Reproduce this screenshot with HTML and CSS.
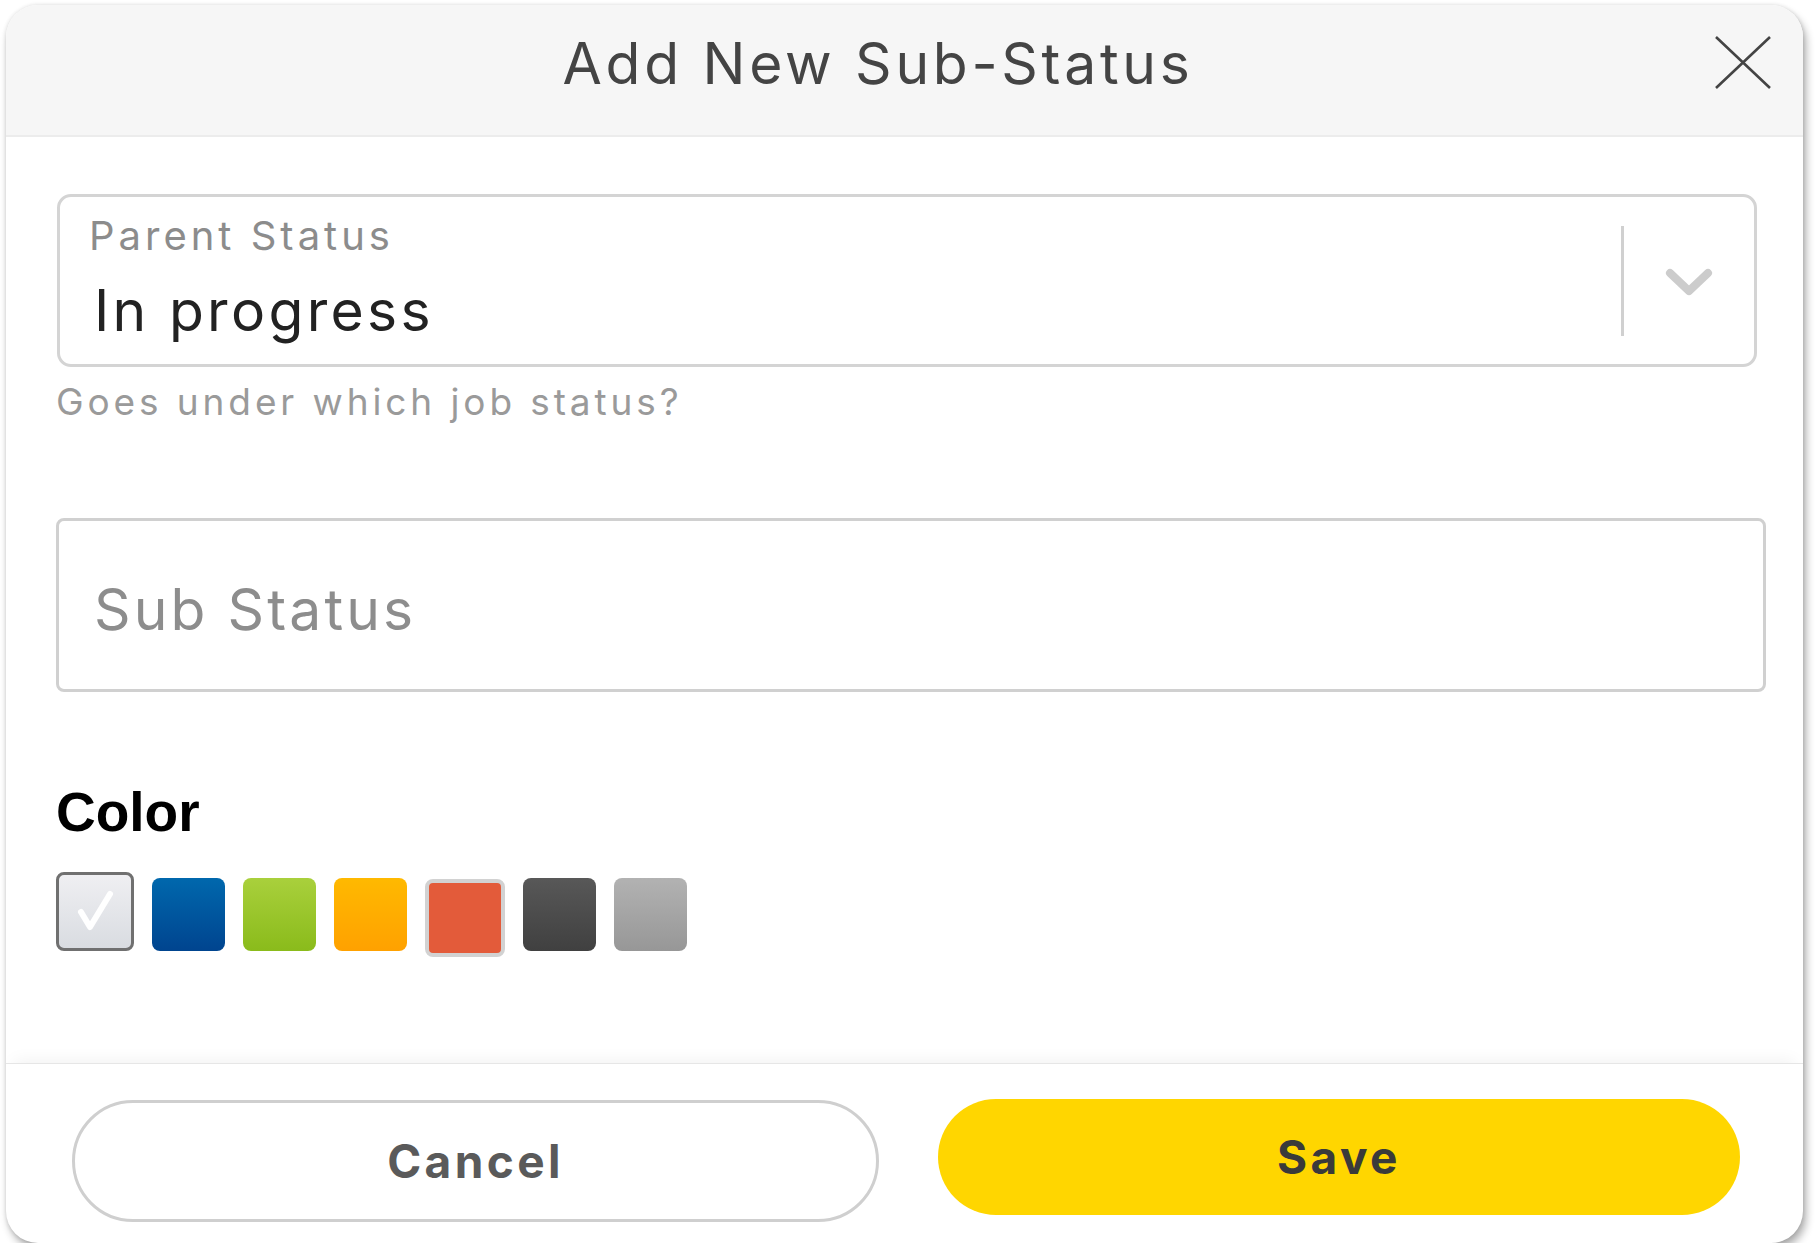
FILE: index.html
```html
<!DOCTYPE html>
<html lang="en">
<head>
<meta charset="UTF-8" />
<meta name="viewport" content="width=device-width, initial-scale=1" />
<title>Add New Sub-Status</title>
<link rel="stylesheet" href="styles.css">
</head>
<body>
<div class="dialog">
  <div class="dialog-header">
    <h1 class="dialog-title">Add New Sub-Status</h1>
    <button class="close-btn" aria-label="Close">
      <svg width="58" height="55" viewBox="0 0 58 55">
        <path d="M2 2 L56 53 M56 2 L2 53" stroke="#444" stroke-width="2.6" fill="none" />
      </svg>
    </button>
  </div>

  <div class="dialog-body">
    <div class="select-box">
      <div class="select-value">
        <div class="select-label">Parent Status</div>
        <div class="select-text">In progress</div>
      </div>
      <div class="select-sep"></div>
      <div class="select-arrow">
        <svg width="50" height="32" viewBox="0 0 50 32">
          <polyline points="6,6 25,24 44,6" stroke="#cccccc" stroke-width="8" fill="none" stroke-linecap="round" stroke-linejoin="round" />
        </svg>
      </div>
    </div>
    <div class="helper">Goes under which job status?</div>

    <div class="text-input">Sub Status</div>

    <div class="color-label">Color</div>
    <div class="swatches">
      <div class="swatch swatch-white selected">
        <svg width="72" height="73" viewBox="0 0 72 73">
          <polyline points="22,37 31,52 51,19" stroke="#fff" stroke-width="6" fill="none" stroke-linecap="round" stroke-linejoin="round" />
        </svg>
      </div>
      <div class="swatch swatch-blue"></div>
      <div class="swatch swatch-green"></div>
      <div class="swatch swatch-orange"></div>
      <div class="swatch swatch-red focused"></div>
      <div class="swatch swatch-dark"></div>
      <div class="swatch swatch-gray"></div>
    </div>
  </div>

  <div class="dialog-footer">
    <button class="btn btn-cancel">Cancel</button>
    <button class="btn btn-save">Save</button>
  </div>
</div>
</body>
</html>
```
FILE: styles.css
```css
body { margin: 0; background: #fff; font-family: Inter, "Open Sans", sans-serif; }

.dialog { width: 1797px; height: 1238px; margin: 5px 0 0 6px; background: #fff; border-radius: 32px; overflow: hidden; display: flex; flex-direction: column; box-shadow: 3px 6px 8px rgba(0,0,0,0.32), 0 0 4px rgba(0,0,0,0.12); }

.dialog-header { height: 112px; padding: 3px 18px 15px 50px; display: flex; align-items: center; background: #f6f6f6; border-bottom: 2px solid #ececec; flex-shrink: 0; }
.dialog-title { flex: 1; margin: 0; text-align: center; font-size: 57px; font-weight: 400; line-height: 68px; color: #444; letter-spacing: 3.7px; }
.close-btn { width: 85px; height: 60px; margin-top: -3px; padding: 0; border: none; background: none; display: flex; align-items: center; justify-content: center; cursor: pointer; }

.dialog-body { flex: 1; padding: 57px 0 0 50px; }

.select-box { width: 1700px; height: 173px; margin-left: 1px; border: 3px solid #d4d4d4; border-radius: 14px; display: flex; align-items: center; box-sizing: border-box; }
.select-value { flex: 1; padding: 16px 0 21px 29px; }
.select-label { font-size: 40px; line-height: 46px; color: #8c8c8c; letter-spacing: 4px; }
.select-text { margin-top: 20px; padding-left: 5px; font-size: 57px; line-height: 64px; color: #222; letter-spacing: 3.3px; }
.select-sep { width: 3px; height: 110px; background: #d0d0d0; }
.select-arrow { width: 130px; display: flex; justify-content: center; padding-top: 4px; }

.helper { margin-top: 15px; font-size: 37px; line-height: 40px; color: #9a9a9a; letter-spacing: 3.9px; }

.text-input { width: 1710px; height: 174px; margin-top: 96px; padding: 8px 0 0 35px; border: 3px solid #d0d0d0; border-radius: 8px; display: flex; align-items: center; font-size: 57px; color: #8d8d8d; letter-spacing: 3.1px; box-sizing: border-box; }

.color-label { margin-top: 90px; font-family: "Liberation Sans", Arial, sans-serif; font-weight: bold; font-size: 55px; line-height: 60px; color: #000; }

.swatches { margin-top: 30px; display: flex; align-items: flex-start; gap: 18px; }
.swatch { width: 73px; height: 73px; margin-top: 6px; border-radius: 8px; box-sizing: border-box; }
.swatch-white { background: linear-gradient(#efeff2, #d9dce1); }
.swatch-blue { background: linear-gradient(#0068ad, #00448f); }
.swatch-green { background: linear-gradient(#a9d03c, #8abb1b); }
.swatch-orange { background: linear-gradient(#ffb900, #ffa100); }
.swatch-red { background: #e35b3a; }
.swatch-dark { background: linear-gradient(#585858, #404040); }
.swatch-gray { background: linear-gradient(#b2b2b2, #979797); }
.swatch.selected { width: 78px; height: 79px; margin-top: 0; border: 3px solid #707070; }
.swatch.focused { width: 80px; height: 78px; margin-top: 7px; border: 4px solid #d2d2d2; }

.dialog-footer { height: 180px; padding: 36px 63px 0 66px; display: flex; align-items: flex-start; gap: 59px; border-top: 1px solid #e6e6e6; box-shadow: 0 -10px 16px -8px rgba(0,0,0,0.06); box-sizing: border-box; flex-shrink: 0; }
.btn { border-radius: 61px; font-family: Inter, "Open Sans", sans-serif; font-weight: 700; font-size: 46px; letter-spacing: 3.4px; cursor: pointer; }
.btn-cancel { width: 807px; height: 122px; background: #fff; border: 3px solid #cfcfcf; color: #5a5a5a; }
.btn-save { flex: 1; height: 116px; margin-top: -1px; background: #ffd600; border: none; color: #3a3a3a; }
```
